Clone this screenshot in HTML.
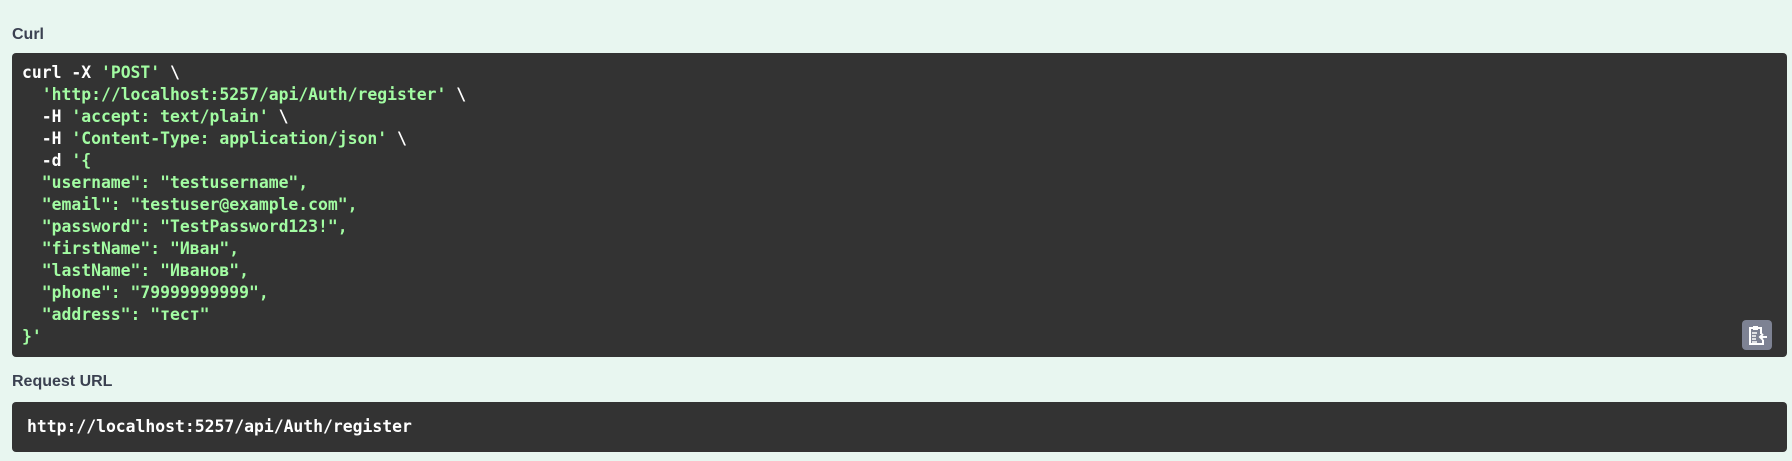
<!DOCTYPE html>
<html><head><meta charset="utf-8"><style>
body{margin:0;background:#e8f6f0;width:1792px;height:461px;overflow:hidden;font-family:"Liberation Sans",sans-serif;}
h4{position:absolute;left:12px;margin:0;font-size:16px;font-weight:bold;color:#3b4151;}
.box{position:absolute;left:12px;width:1775px;background:#333;border-radius:4px;box-sizing:border-box;}
pre{margin:0;font-family:"DejaVu Sans Mono","Liberation Mono",monospace;font-weight:bold;font-size:16.4px;line-height:22px;color:#fff;}
.g{color:#a2fca2;}
.btn{position:absolute;left:1742px;top:320px;width:30px;height:30px;background:#7d8293;border-radius:4px;}
</style></head><body>
<h4 style="top:26px">Curl</h4>
<div class="box" style="top:53px;height:304px;padding:9px 10px;">
<pre>curl -X <span class="g">'POST'</span> \
  <span class="g">'http://localhost:5257/api/Auth/register'</span> \
  -H <span class="g">'accept: text/plain'</span> \
  -H <span class="g">'Content-Type: application/json'</span> \
  -d <span class="g">'{
  "username": "testusername",
  "email": "testuser@example.com",
  "password": "TestPassword123!",
  "firstName": "Иван",
  "lastName": "Иванов",
  "phone": "79999999999",
  "address": "тест"
}'</span></pre></div>
<div class="btn"><svg width="30" height="30" viewBox="0 0 30 30" fill="none" stroke="#fff" stroke-width="2"><path d="M11 8h-3v16h13v-4M19 14v-6h-3"/><rect x="11" y="6" width="5" height="4" fill="#fff" stroke="none"/><path d="M10 13h5M10 16h4M10 19h4M10 22h5" stroke-width="1.5"/><path d="M25 17h-7M21 14l-3 3 3 3"/></svg></div>
<h4 style="top:373px">Request URL</h4>
<div class="box" style="top:402px;height:50px;padding:14px 15px;">
<pre>http://localhost:5257/api/Auth/register</pre></div>
</body></html>
